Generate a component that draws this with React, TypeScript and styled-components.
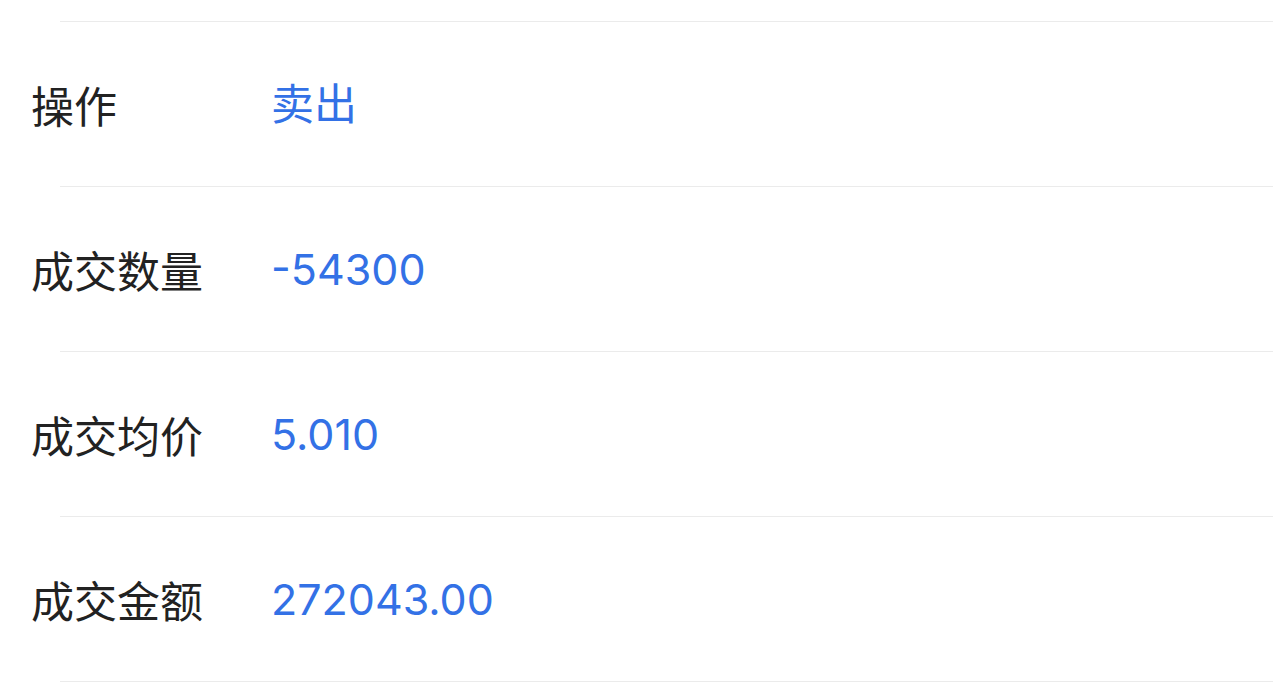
import React from "react";
import styled, { createGlobalStyle } from "styled-components";

const Global = createGlobalStyle`
  html, body { margin: 0; padding: 0; background: #ffffff; }
  body { font-family: "Noto Sans CJK SC", "Noto Sans", sans-serif; overflow: hidden; }
`;

const List = styled.div`
  display: flex;
  flex-direction: column;
  padding-top: 21px;
`;

const Divider = styled.div`
  height: 1px;
  margin-left: 60px;
  background: #ebebeb;
`;

const Row = styled.div`
  display: flex;
  align-items: center;
  height: 164px;
  padding-left: 31px;
`;

const Label = styled.div`
  width: 240px;
  font-size: 43px;
  line-height: 1;
  color: #222222;
`;

const Value = styled.div`
  font-family: "Inter", "Noto Sans CJK SC", sans-serif;
  font-size: 43px;
  line-height: 1;
  color: #3371e6;
`;

const rows = [
  ["操作", "卖出"],
  ["成交数量", "-54300"],
  ["成交均价", "5.010"],
  ["成交金额", "272043.00"],
];

export default function App() {
  return (
    <>
      <Global />
      <List>
        <Divider />
        {rows.map(([k, v]) => (
          <React.Fragment key={k}>
            <Row>
              <Label>{k}</Label>
              <Value>{v}</Value>
            </Row>
            <Divider />
          </React.Fragment>
        ))}
      </List>
    </>
  );
}
